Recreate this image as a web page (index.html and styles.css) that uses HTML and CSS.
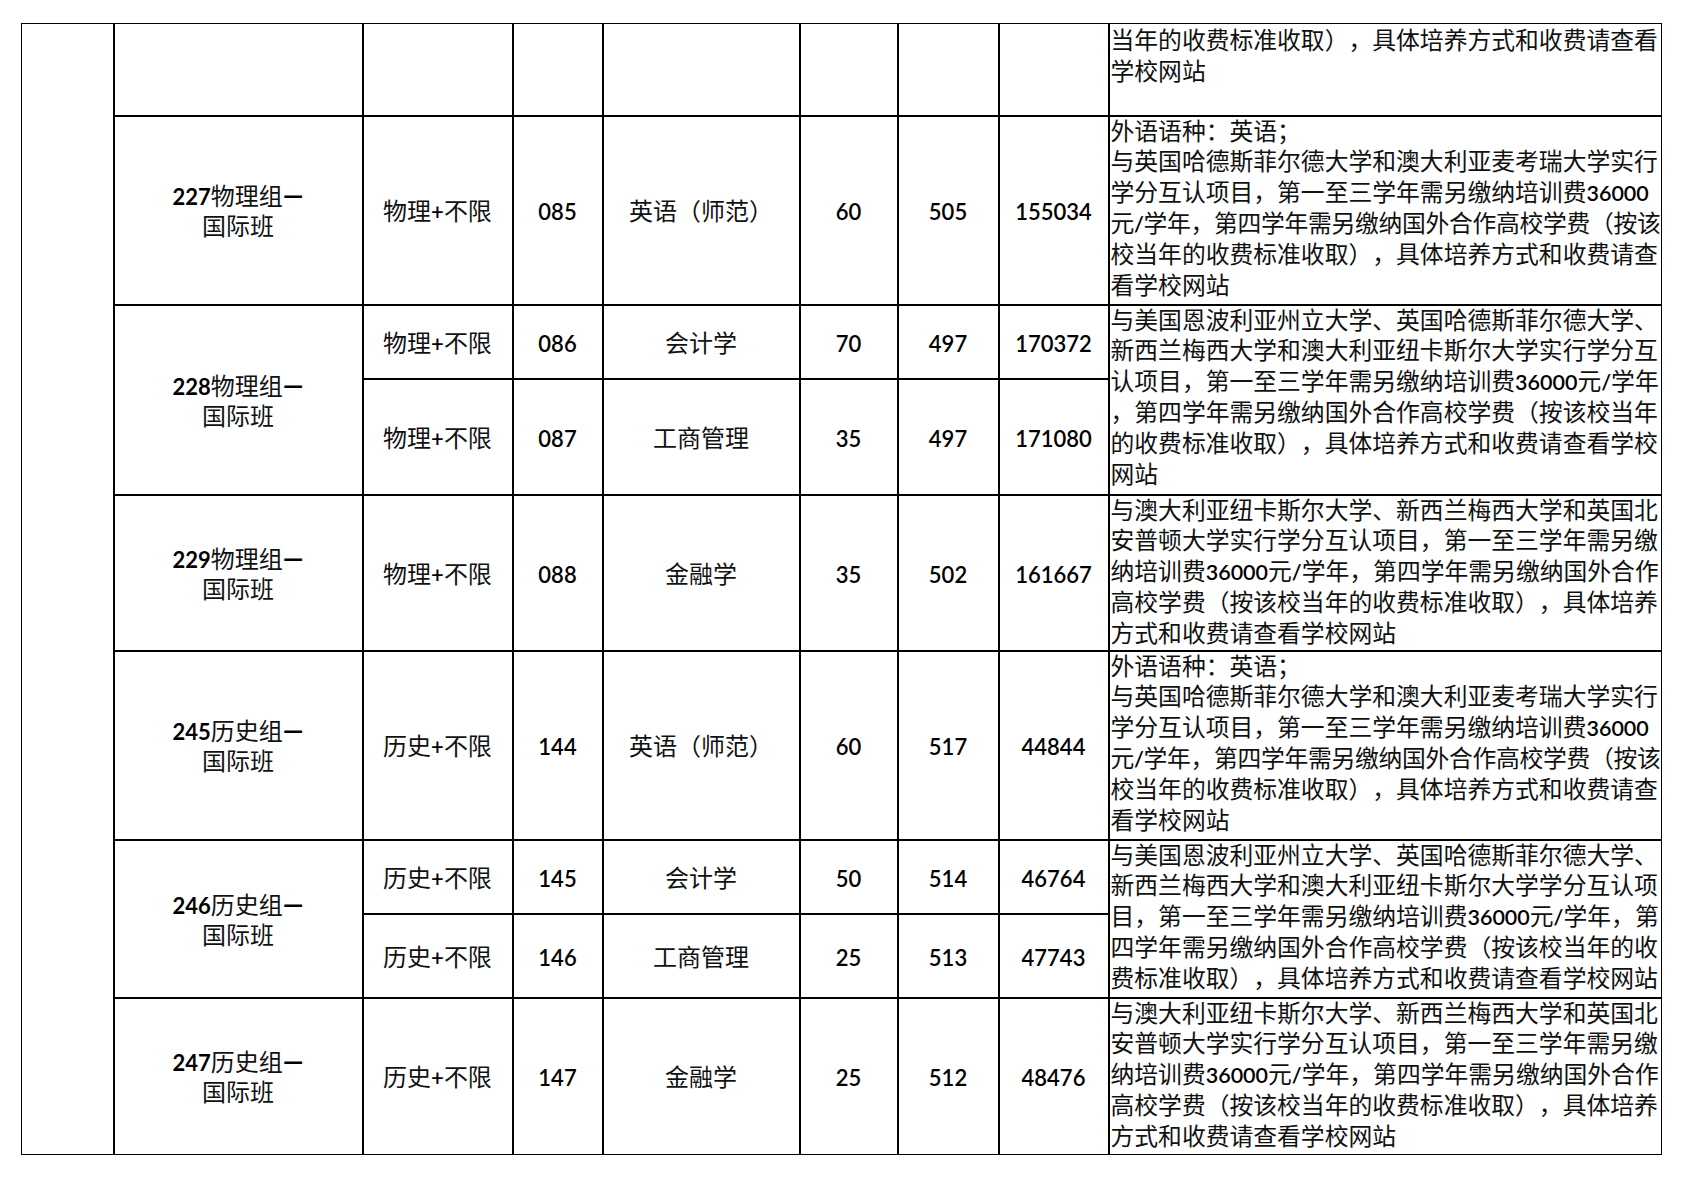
FILE: index.html
```html
<!DOCTYPE html>
<html lang="zh-CN">
<head>
<meta charset="utf-8">
<title>国际班招生计划</title>
<link rel="stylesheet" href="styles.css">
</head>
<body>
<table class="plan">
  <colgroup>
    <col class="w0"><col class="w1"><col class="w2"><col class="w3"><col class="w4"><col class="w5"><col class="w6"><col class="w7"><col class="w8">
  </colgroup>
  <tbody>
    <tr class="h0">
      <td class="edge-l edge-t edge-b" rowspan="9"></td>
      <td class="edge-t"></td>
      <td class="edge-t"></td>
      <td class="edge-t"></td>
      <td class="edge-t"></td>
      <td class="edge-t"></td>
      <td class="edge-t"></td>
      <td class="edge-t"></td>
      <td class="desc top edge-t edge-r">
        <span class="ln">当年的收费标准收取），具体培养方式和收费请查看</span>
        <span class="ln">学校网站</span>
      </td>
    </tr>
    <tr class="h189">
      <td class="grp"><span class="ln"><span class="nb">227</span>物理组<span class="dash">—</span></span><span class="ln">国际班</span></td>
      <td>物理<span class="n">+</span>不限</td>
      <td><span class="n">085</span></td>
      <td>英语（师范）</td>
      <td><span class="n">60</span></td>
      <td><span class="n">505</span></td>
      <td><span class="n">155034</span></td>
      <td class="desc edge-r">
        <span class="ln">外语语种：英语；</span>
        <span class="ln">与英国哈德斯菲尔德大学和澳大利亚麦考瑞大学实行</span>
        <span class="ln">学分互认项目，第一至三学年需另缴纳培训费<span class="n">36000</span></span>
        <span class="ln t">元<span class="n">/</span>学年，第四学年需另缴纳国外合作高校学费（按该</span>
        <span class="ln">校当年的收费标准收取），具体培养方式和收费请查</span>
        <span class="ln">看学校网站</span>
      </td>
    </tr>
    <tr class="h74">
      <td class="grp" rowspan="2"><span class="ln"><span class="nb">228</span>物理组<span class="dash">—</span></span><span class="ln">国际班</span></td>
      <td>物理<span class="n">+</span>不限</td>
      <td><span class="n">086</span></td>
      <td>会计学</td>
      <td><span class="n">70</span></td>
      <td><span class="n">497</span></td>
      <td><span class="n">170372</span></td>
      <td class="desc edge-r" rowspan="2">
        <span class="ln">与美国恩波利亚州立大学、英国哈德斯菲尔德大学、</span>
        <span class="ln">新西兰梅西大学和澳大利亚纽卡斯尔大学实行学分互</span>
        <span class="ln">认项目，第一至三学年需另缴纳培训费<span class="n">36000</span>元<span class="n">/</span>学年</span>
        <span class="ln">，第四学年需另缴纳国外合作高校学费（按该校当年</span>
        <span class="ln">的收费标准收取），具体培养方式和收费请查看学校</span>
        <span class="ln">网站</span>
      </td>
    </tr>
    <tr class="h116">
      <td>物理<span class="n">+</span>不限</td>
      <td><span class="n">087</span></td>
      <td>工商管理</td>
      <td><span class="n">35</span></td>
      <td><span class="n">497</span></td>
      <td><span class="n">171080</span></td>
    </tr>
    <tr class="h156">
      <td class="grp"><span class="ln"><span class="nb">229</span>物理组<span class="dash">—</span></span><span class="ln">国际班</span></td>
      <td>物理<span class="n">+</span>不限</td>
      <td><span class="n">088</span></td>
      <td>金融学</td>
      <td><span class="n">35</span></td>
      <td><span class="n">502</span></td>
      <td><span class="n">161667</span></td>
      <td class="desc edge-r">
        <span class="ln">与澳大利亚纽卡斯尔大学、新西兰梅西大学和英国北</span>
        <span class="ln">安普顿大学实行学分互认项目，第一至三学年需另缴</span>
        <span class="ln">纳培训费<span class="n">36000</span>元<span class="n">/</span>学年，第四学年需另缴纳国外合作</span>
        <span class="ln">高校学费（按该校当年的收费标准收取），具体培养</span>
        <span class="ln">方式和收费请查看学校网站</span>
      </td>
    </tr>
    <tr class="h189">
      <td class="grp"><span class="ln"><span class="nb">245</span>历史组<span class="dash">—</span></span><span class="ln">国际班</span></td>
      <td>历史<span class="n">+</span>不限</td>
      <td><span class="n">144</span></td>
      <td>英语（师范）</td>
      <td><span class="n">60</span></td>
      <td><span class="n">517</span></td>
      <td><span class="n">44844</span></td>
      <td class="desc edge-r">
        <span class="ln">外语语种：英语；</span>
        <span class="ln">与英国哈德斯菲尔德大学和澳大利亚麦考瑞大学实行</span>
        <span class="ln">学分互认项目，第一至三学年需另缴纳培训费<span class="n">36000</span></span>
        <span class="ln t">元<span class="n">/</span>学年，第四学年需另缴纳国外合作高校学费（按该</span>
        <span class="ln">校当年的收费标准收取），具体培养方式和收费请查</span>
        <span class="ln">看学校网站</span>
      </td>
    </tr>
    <tr class="h74">
      <td class="grp" rowspan="2"><span class="ln"><span class="nb">246</span>历史组<span class="dash">—</span></span><span class="ln">国际班</span></td>
      <td>历史<span class="n">+</span>不限</td>
      <td><span class="n">145</span></td>
      <td>会计学</td>
      <td><span class="n">50</span></td>
      <td><span class="n">514</span></td>
      <td><span class="n">46764</span></td>
      <td class="desc edge-r" rowspan="2">
        <span class="ln">与美国恩波利亚州立大学、英国哈德斯菲尔德大学、</span>
        <span class="ln">新西兰梅西大学和澳大利亚纽卡斯尔大学学分互认项</span>
        <span class="ln">目，第一至三学年需另缴纳培训费<span class="n">36000</span>元<span class="n">/</span>学年，第</span>
        <span class="ln">四学年需另缴纳国外合作高校学费（按该校当年的收</span>
        <span class="ln">费标准收取），具体培养方式和收费请查看学校网站</span>
      </td>
    </tr>
    <tr class="h84">
      <td>历史<span class="n">+</span>不限</td>
      <td><span class="n">146</span></td>
      <td>工商管理</td>
      <td><span class="n">25</span></td>
      <td><span class="n">513</span></td>
      <td><span class="n">47743</span></td>
    </tr>
    <tr class="h157">
      <td class="grp edge-b"><span class="ln"><span class="nb">247</span>历史组<span class="dash">—</span></span><span class="ln">国际班</span></td>
      <td class="edge-b">历史<span class="n">+</span>不限</td>
      <td class="edge-b"><span class="n">147</span></td>
      <td class="edge-b">金融学</td>
      <td class="edge-b"><span class="n">25</span></td>
      <td class="edge-b"><span class="n">512</span></td>
      <td class="edge-b"><span class="n">48476</span></td>
      <td class="desc edge-r edge-b">
        <span class="ln">与澳大利亚纽卡斯尔大学、新西兰梅西大学和英国北</span>
        <span class="ln">安普顿大学实行学分互认项目，第一至三学年需另缴</span>
        <span class="ln">纳培训费<span class="n">36000</span>元<span class="n">/</span>学年，第四学年需另缴纳国外合作</span>
        <span class="ln">高校学费（按该校当年的收费标准收取），具体培养</span>
        <span class="ln">方式和收费请查看学校网站</span>
      </td>
    </tr>
  </tbody>
</table>
</body>
</html>
```

FILE: styles.css
```css
html, body {
  margin: 0;
  padding: 0;
  background: #ffffff;
}

body {
  padding: 23px 0 0 21px;
  font-family: "Noto Sans CJK SC", "Noto Sans", sans-serif;
  font-size: 24px;
  color: #111111;
  text-spacing-trim: space-all;
}

.plan {
  border-collapse: collapse;
  table-layout: fixed;
  width: 1640px;
}

.w0 { width: 92px; }
.w1 { width: 249px; }
.w2 { width: 150px; }
.w3 { width: 90px; }
.w4 { width: 197px; }
.w5 { width: 98px; }
.w6 { width: 101px; }
.w7 { width: 110px; }
.w8 { width: 553px; }

.plan td {
  border: 2px solid #000000;
  padding: 0;
  text-align: center;
  vertical-align: middle;
  white-space: nowrap;
  line-height: 30px;
  overflow: visible;
}

.plan td.edge-l { border-left-width: 1px; }
.plan td.edge-t { border-top-width: 1px; }
.plan td.edge-b { border-bottom-width: 1px; }
.plan td.edge-r { border-right-width: 1px; }

.h0 { height: 92px; }
.h189 { height: 189px; }
.h74 { height: 74px; }
.h116 { height: 116px; }
.h156 { height: 156px; }
.h84 { height: 84px; }
.h157 { height: 157px; }

.ln {
  display: block;
}

.plan td.desc {
  text-align: left;
  vertical-align: top;
  padding: 0 0 0 1px;
  font-size: 23.8px;
  line-height: 30.9px;
}

.desc .ln:first-child {
  margin-top: -2px;
}

.desc.top .ln:first-child {
  margin-top: 0;
}

.desc .ln.t {
  letter-spacing: -0.3px;
}

.n,
.nb,
.dash {
  line-height: 0;
}

.n {
  font-family: "Lato", "Liberation Sans", sans-serif;
  font-size: 22px;
  font-weight: 600;
  color: #000000;
}

.desc .n {
  font-size: 21.5px;
}

.nb {
  font-family: "Lato", "Liberation Sans", sans-serif;
  font-size: 22px;
  font-weight: 700;
  color: #000000;
}

.dash {
  font-family: "Lato", "Liberation Sans", sans-serif;
  font-size: 26px;
  font-weight: 900;
  color: #000000;
}
```
